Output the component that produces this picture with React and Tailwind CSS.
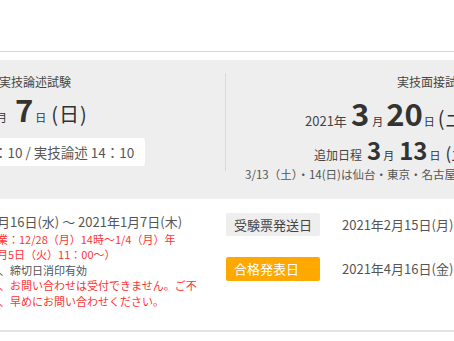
export default function App() {
  return (
    <div className="w-[454px] h-[341px] overflow-hidden bg-white font-['Noto_Sans_CJK_JP','Noto_Sans',sans-serif] text-[#444]">
      <div className="h-[51px]" />
      <div className="h-px bg-[#d6d6d6]" />
      <div className="h-[8px]" />

      {/* schedule panel */}
      <section className="h-[139px] bg-[#eeeeee] flex">
        <div className="w-[225px] shrink-0 overflow-hidden">
          <div className="pt-[14px] ml-[-1px] text-[12px] leading-[16px] whitespace-nowrap">実技論述試験</div>
          <div className="mt-[3px] ml-[-4px] flex items-baseline whitespace-nowrap text-[#333]">
            <span className="text-[11px]">月</span>
            <span className="ml-[8px] text-[31px] leading-[31px] font-bold">7</span>
            <span className="ml-[2px] text-[11px]">日</span>
            <span className="ml-[5px] text-[20px] tracking-[1px]">(日)</span>
          </div>
          <div className="mt-[9px] ml-[-12px] w-[157px] h-[28px] bg-white rounded-[3px] flex items-center pl-[6px] text-[13.5px] text-[#555] whitespace-nowrap">
            ：10 / 実技論述 14：10
          </div>
        </div>

        <div className="w-px shrink-0 mt-[13px] h-[98px] bg-[#d9d9d9]" />

        <div className="flex-1 overflow-hidden whitespace-nowrap">
          <div className="pt-[14px] pl-[171px] text-[12px] leading-[16px]">実技面接試験</div>
          <div className="mt-[7px] pl-[79px] flex items-baseline text-[#333]">
            <span className="text-[13px] text-[#444]">2021年</span>
            <span className="ml-[4px] text-[31px] leading-[31px] font-bold">3</span>
            <span className="ml-[3px] text-[11px]">月</span>
            <span className="ml-[3px] text-[31px] leading-[31px] font-bold">20</span>
            <span className="ml-[1px] text-[11px]">日</span>
            <span className="ml-[3px] text-[20px] tracking-[1px]">(土)</span>
          </div>
          <div className="mt-[4px] pl-[88px] flex items-baseline text-[#333]">
            <span className="text-[12px] text-[#444]">追加日程</span>
            <span className="ml-[5px] text-[24px] leading-[26px] font-bold">3</span>
            <span className="ml-[2px] text-[11px]">月</span>
            <span className="ml-[5px] text-[24px] leading-[26px] font-bold">13</span>
            <span className="ml-[2px] text-[11px]">日</span>
            <span className="ml-[5px] text-[17px]">(土)</span>
          </div>
          <div className="mt-[1px] pl-[19px] text-[11.5px] leading-[14px] text-[#555]">
            3/13（土）・14(日)は仙台・東京・名古屋会場
          </div>
        </div>
      </section>

      {/* dates */}
      <section className="h-[131px] flex">
        <div className="w-[226px] shrink-0 overflow-hidden whitespace-nowrap pt-[15px]">
          <div className="ml-[-3px] text-[13px] leading-[16px] text-[#555]">月16日(水) 〜 2021年1月7日(木)</div>
          <div className="mt-[2px] text-[11px] leading-[15.4px]">
            <div className="ml-[-3px] text-[#f33]">業：12/28（月）14時〜1/4（月）年</div>
            <div className="ml-[-3px] text-[#f33]">月5日（火）11：00〜）</div>
            <div className="ml-[-1px] text-[#555]">、締切日消印有効</div>
            <div className="ml-[-1px] text-[#f33]">、お問い合わせは受付できません。ご不</div>
            <div className="ml-[-1px] text-[#f33]">、早めにお問い合わせください。</div>
          </div>
        </div>
        <div className="flex-1 pt-[14px] flex flex-col gap-[21px] whitespace-nowrap overflow-hidden">
          <div className="flex items-center">
            <span className="w-[94px] h-[23px] shrink-0 rounded-[2px] bg-[#eeeeee] pl-[8px] flex items-center text-[13px] text-[#444]">受験票発送日</span>
            <span className="ml-[22px] text-[13px] text-[#555]">2021年2月15日(月)</span>
          </div>
          <div className="flex items-center">
            <span className="w-[94px] h-[24px] shrink-0 rounded-[2px] bg-[#ffa800] pl-[8px] flex items-center text-[13px] text-white">合格発表日</span>
            <span className="ml-[22px] text-[13px] text-[#555]">2021年4月16日(金)</span>
          </div>
        </div>
      </section>

      <div className="h-[2px] bg-[#e3e3e3]" />
    </div>
  )
}
